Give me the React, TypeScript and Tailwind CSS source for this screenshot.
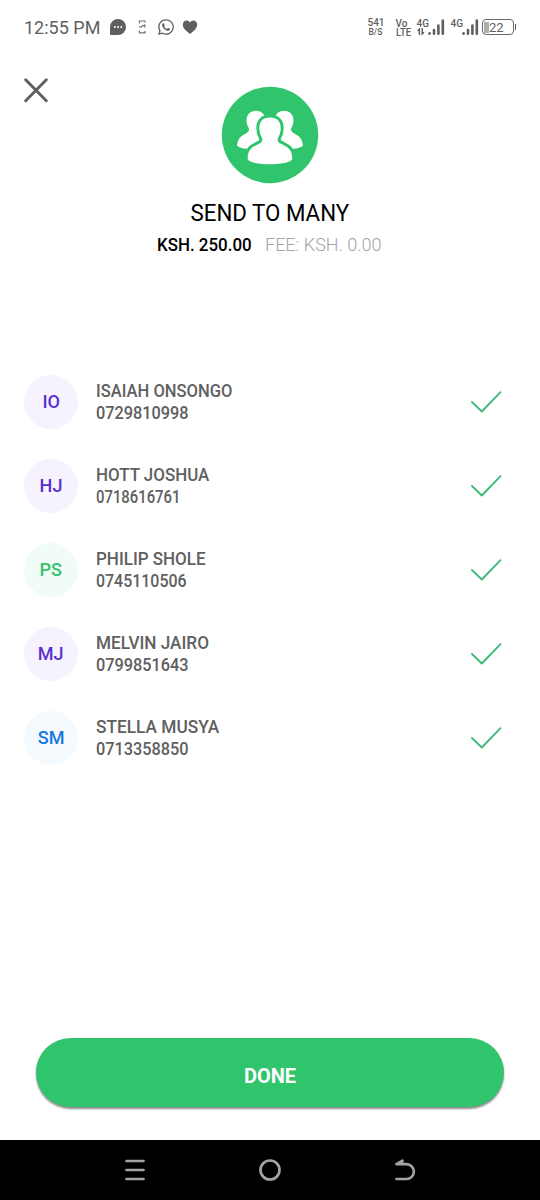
import React from "react";
import { FaWhatsapp } from "react-icons/fa";

type Recipient = {
  initials: string;
  name: string;
  phone: string;
  tone: string;
  nameFit: string;
  phoneFit: string;
};

const recipients: Recipient[] = [
  { initials: "IO", name: "ISAIAH ONSONGO", phone: "0729810998", tone: "bg-[#f6f3fe] text-[#5a30cf]", nameFit: "scale-x-[0.92]", phoneFit: "scale-x-[0.905]" },
  { initials: "HJ", name: "HOTT JOSHUA", phone: "0718616761", tone: "bg-[#f6f3fe] text-[#5a30cf]", nameFit: "scale-x-[0.94]", phoneFit: "scale-x-[0.825]" },
  { initials: "PS", name: "PHILIP SHOLE", phone: "0745110506", tone: "bg-[#f0fcf5] text-[#35c16f]", nameFit: "scale-x-[0.944]", phoneFit: "scale-x-[0.885]" },
  { initials: "MJ", name: "MELVIN JAIRO", phone: "0799851643", tone: "bg-[#f6f3fe] text-[#5a30cf]", nameFit: "scale-x-[0.953]", phoneFit: "scale-x-[0.905]" },
  { initials: "SM", name: "STELLA MUSYA", phone: "0713358850", tone: "bg-[#f4fafe] text-[#1778dc]", nameFit: "scale-x-[0.96]", phoneFit: "scale-x-[0.905]" },
];

function SignalBars() {
  return (
    <svg className="-ml-[1px] mr-[1px] shrink-0" width="17" height="18" viewBox="0 0 17 18" stroke="#606060" strokeWidth="2.6" strokeLinecap="round">
      <path d="M1.6 15.3v.4M6 12v3.7M10.4 7.6v8.1M14.8 2.6v13.1" />
    </svg>
  );
}

function StatusBar() {
  return (
    <header className="flex h-[54px] items-center justify-between pl-6 pr-6 text-[#5f5f5f]">
      <div className="flex items-center">
        <span className="w-[85px] whitespace-nowrap text-[18px]">12:55 PM</span>
        <svg width="18" height="18" viewBox="0 0 18 18">
          <path d="M9 1a8 8 0 1 1 0 16H2.2a1.2 1.2 0 0 1-1.2-1.2V9a8 8 0 0 1 8-8Z" fill="#5f5f5f" />
          <g fill="#fff"><circle cx="5.8" cy="9" r="1" /><circle cx="9" cy="9" r="1" /><circle cx="12.2" cy="9" r="1" /></g>
        </svg>
        <svg className="ml-[11px]" width="9" height="14" viewBox="0 0 9 14" fill="none" stroke="#707070" strokeWidth="1.2">
          <path d="M1.400 3.200V1H7V2.600M1.400 10.400V12.800H7V11M1 6.800H3.600L5 5.600H7.400M6.800 4.600V7.600" />
        </svg>
        <FaWhatsapp className="ml-2.5" size={18} />
        <svg className="ml-[7px]" width="16" height="16" viewBox="0 0 16 16" fill="#5f5f5f">
          <path d="M8 15C5 12.700.8 9.500.8 5.800.8 3.300 2.500 1.600 4.500 1.600 6 1.600 7.300 2.400 8 3.500 8.700 2.400 10 1.600 11.500 1.600 13.500 1.600 15.200 3.300 15.200 5.800 15.200 9.500 11 12.700 8 15Z" />
        </svg>
      </div>
      <div className="flex items-center font-medium">
        <div className="-ml-px flex w-[28px] flex-col items-start">
          <span className="text-[10px] leading-[10px]">541</span>
          <span className="ml-px text-[8.500px] leading-[9px]">B/S</span>
        </div>
        <div className="flex w-[21px] flex-col items-start pt-[2px] text-[10px] leading-[9px]">
          <span>Vo</span>
          <span className="origin-left scale-x-[0.95]">LTE</span>
        </div>
        <div className="flex h-4 w-[12px] flex-col">
          <span className="text-[10px] leading-[9px]">4G</span>
          <svg width="8" height="7" viewBox="0 0 8 7" fill="none" stroke="#606060" strokeWidth="1.400">
            <path d="M2.400 7V1L.600 2.800M5.200 0v6L7 4.200" />
          </svg>
        </div>
        <SignalBars />
        <span className="ml-[5px] h-4 w-[12px] text-[10px] leading-[9px]">4G</span>
        <SignalBars />
        <div className="ml-[2px] flex h-4 w-[32px] items-center rounded-[4px] border-[1.500px] border-[#686868] p-[1.500px] text-[13px] font-normal leading-none">
          <span className="h-full w-[5px] shrink-0 bg-[#adadad]" />
          <span>22</span>
        </div>
        <span className="ml-[1px] h-[6px] w-[1.500px] bg-[#606060]" />
      </div>
    </header>
  );
}

const sidePerson =
  "M43 29C40 24 32 23.500 28 27.500C25.200 30.500 24.800 36 26.500 39.500C27.800 42 28.600 43.500 27.500 45.200C25.500 47.800 21.500 48.500 19 51.500C16.800 54.500 16 58 16.200 60C19 62 23.500 62.800 29 62.800H46V34Z";

function GroupBadge() {
  return (
    <svg width="98" height="98" viewBox="0 0 98 98">
      <circle cx="49" cy="49" r="48.200" fill="#30c56c" />
      <path d={sidePerson} fill="#fff" />
      <path d={sidePerson} fill="#fff" transform="matrix(-1 0 0 1 98 0)" />
      <path d="M49 31.500C42 31.500 38.300 35.500 38.300 42C38.300 46 39.300 49 40.800 51.500C42 54 41.500 56 38.500 57.500C33 60.500 26.700 62 26.700 72.500C26.700 77 41 78.200 49 78.200S71.300 77 71.300 72.500C71.300 62 65 60.500 59.500 57.500C56.500 56 56 54 57.200 51.500C58.700 49 59.700 46 59.700 42C59.700 35.500 56 31.500 49 31.500Z" fill="#fff" stroke="#30c56c" strokeWidth="6" paintOrder="stroke" />
    </svg>
  );
}

export default function App() {
  return (
    <div className="flex h-[1200px] w-[540px] flex-col overflow-hidden bg-white font-['Roboto',sans-serif]">
      <StatusBar />
      <main className="flex flex-1 flex-col">
        <div className="grid h-[132px] grid-cols-[1fr_98px_1fr] items-start">
          <button aria-label="Close" className="ml-6 mt-6 w-6">
            <svg width="24" height="25" viewBox="0 0 24 25" stroke="#5f5f5f" strokeWidth="2.900" strokeLinecap="round">
              <path d="M1.700 1.700 22.300 22.700M22.300 1.700 1.700 22.700" />
            </svg>
          </button>
          <div className="mt-8"><GroupBadge /></div>
        </div>
        <div className="flex h-[188px] flex-col items-center pt-[13px]">
          <h1 className="whitespace-nowrap text-[23px] leading-[30px] text-black">
            <span className="inline-block scale-x-[0.97]">SEND TO MANY</span>
          </h1>
          <div className="mt-[2px] -ml-px flex gap-[13px] whitespace-nowrap text-[18px] leading-[28px]">
            <p className="flex w-[95px] font-medium text-black"><span className="inline-block origin-left scale-x-[0.94]">KSH. 250.00</span></p>
            <p className="flex w-[117px] font-light text-[#a4a4a4]"><span className="inline-block origin-left">FEE: KSH. 0.00</span></p>
          </div>
        </div>
        <ul className="-mt-[14px] flex flex-col">
          {recipients.map((r) => (
            <li key={r.name} className="flex h-[84px] items-center pl-6 pr-[38px]">
              <div className={`flex size-[54px] items-center justify-center rounded-full text-[19px] font-medium ${r.tone}`}>
                <span className="scale-x-[0.95]">{r.initials}</span>
              </div>
              <div className="ml-[18px] flex flex-1 flex-col items-start whitespace-nowrap text-[18px] font-medium leading-[22.500px] text-[#606060]">
                <span className={`origin-left ${r.nameFit}`}>{r.name}</span>
                <span className={`origin-left ${r.phoneFit}`}>{r.phone}</span>
              </div>
              <svg width="31" height="22" viewBox="0 0 31 22" fill="none" stroke="#39b878" strokeWidth="1.800" strokeLinecap="round" strokeLinejoin="round">
                <path d="M1 11 10.800 20.500 29.500 1.200" />
              </svg>
            </li>
          ))}
        </ul>
        <div className="mt-auto px-9 pb-[33px]">
          <button className="flex h-[69px] w-full items-center justify-center rounded-full bg-[#30c56c] pt-[6px] text-[20px] font-bold text-white shadow-[0_2px_2px_rgba(0,0,0,0.45)]">
            <span className="inline-block">DONE</span>
          </button>
        </div>
      </main>
      <nav className="grid h-[60px] grid-cols-[67px_1fr_1fr_1fr_67px] place-items-center bg-black">
        <svg className="col-start-2" width="20" height="22" viewBox="0 0 20 22" stroke="#a3a3a3" strokeWidth="2.700" strokeLinecap="round">
          <path d="M1.500 2h17M1.500 11h17M1.500 20h17" />
        </svg>
        <svg width="22" height="22" viewBox="0 0 22 22" fill="none" stroke="#a3a3a3" strokeWidth="2.700">
          <circle cx="11" cy="11" r="9.500" />
        </svg>
        <svg width="22" height="22" viewBox="0 0 22 22" fill="none" stroke="#a3a3a3" strokeWidth="2.700" strokeLinecap="round" strokeLinejoin="round">
          <path d="M2.500 5.200H12.500A7.300 7.300 0 0 1 12.500 20H2.500M2.500 5.200 8.500 1.700 7.500 4.200" />
        </svg>
      </nav>
    </div>
  );
}
